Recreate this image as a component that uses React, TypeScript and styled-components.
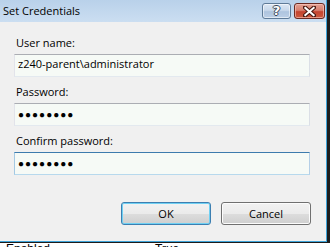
import React from 'react';
import styled, { createGlobalStyle } from 'styled-components';

const GlobalStyle = createGlobalStyle`
  html, body {
    margin: 0;
    padding: 0;
  }
  body {
    background: #fff;
    font-family: 'Open Sans', 'Noto Sans', sans-serif;
    font-size: 11px;
    color: #000;
  }
`;

const Screen = styled.div`
  width: 330px;
  height: 247px;
  overflow: hidden;
  background: #fff;
`;

// dark outline of the window, then the thin aero blue edge inside it
const Frame = styled.div`
  width: 330px;
  height: 243px;
  box-sizing: border-box;
  border-right: 3px solid #1c1c1c;
  border-bottom: 1px solid #1c1c1c;
`;

const Dialog = styled.div`
  height: 100%;
  box-sizing: border-box;
  border-right: 1px solid #3ea4d8;
  border-bottom: 1px solid #3ea4d8;
  background: #f0f0f0;
  display: flex;
  flex-direction: column;
`;

const TitleBar = styled.div`
  height: 22px;
  flex: none;
  box-sizing: border-box;
  padding: 3px 1px 0 3px;
  display: flex;
  align-items: flex-start;
  background: linear-gradient(#b9d1ea, #cbdef1);
`;

const Title = styled.div`
  flex: 1;
  line-height: 16px;
`;

const CaptionButtons = styled.div`
  display: flex;
  gap: 3px;
`;

const CaptionButton = styled.div<{ $close?: boolean }>`
  width: ${({ $close }) => ($close ? '31px' : '29px')};
  height: 16px;
  box-sizing: border-box;
  border-radius: 3px;
  border: 1px solid ${({ $close }) => ($close ? '#6b2a22' : '#5f7b98')};
  box-shadow: inset 0 0 0 1px ${({ $close }) => ($close ? 'rgba(255,210,200,0.55)' : 'rgba(255,255,255,0.55)')};
  background: ${({ $close }) =>
    $close
      ? 'linear-gradient(#e3a194 0%, #d8806f 45%, #c4432f 55%, #cc5a3e 100%)'
      : 'linear-gradient(#dce7f4 0%, #c8d8eb 45%, #aec4de 55%, #bccfe6 100%)'};
  display: flex;
  align-items: center;
  justify-content: center;
`;

const HelpGlyph = styled.span`
  font-family: 'DejaVu Sans', sans-serif;
  font-weight: bold;
  font-size: 13px;
  line-height: 14px;
  color: #fff;
  text-shadow: 1px 0 0 #3b4656, -1px 0 0 #3b4656, 0 1px 0 #3b4656, 0 -1px 0 #3b4656;
`;

const Body = styled.div`
  flex: 1;
  display: flex;
  flex-direction: column;
  padding: 13px 16px 0 14px;
`;

const Group = styled.div`
  display: flex;
  flex-direction: column;
  margin-bottom: 7px;
`;

const Label = styled.div`
  line-height: 15px;
  padding-left: 2px;
  margin-bottom: 4px;
`;

const Field = styled.div<{ $focused?: boolean }>`
  height: 23px;
  box-sizing: border-box;
  padding: 0 3px;
  line-height: 18px;
  background: #f6faf6;
  border: 1px solid;
  border-color: ${({ $focused }) =>
    $focused ? '#3d7bad #b5cfe7 #b7d9ed #a4c9e3' : '#abadb3 #dbdfe6 #e3e9ef #e2e3ea'};
  white-space: nowrap;
  overflow: hidden;
`;

const Dots = styled.span`
  font-family: 'Liberation Sans', sans-serif;
  font-size: 10px;
  letter-spacing: 1px;
  line-height: 21px;
`;

const Footer = styled.div`
  display: flex;
  justify-content: flex-end;
  gap: 10px;
  padding: 0 15px 16px 0;
`;

const Button = styled.div<{ $default?: boolean }>`
  width: 90px;
  height: 23px;
  box-sizing: border-box;
  border: 1px solid ${({ $default }) => ($default ? '#3c7fb1' : '#707070')};
  border-radius: 3px;
  box-shadow: inset 0 0 0 1px ${({ $default }) => ($default ? '#6fd0f3' : '#fcfcfc')};
  background: linear-gradient(#f2f2f2 0%, #ebebeb 50%, #dddddd 51%, #cfcfcf 100%);
  text-align: center;
  line-height: 21px;
`;

const Behind = styled.div`
  height: 4px;
  overflow: hidden;
  display: flex;
  padding-left: 6px;
  font-family: 'Liberation Sans', sans-serif;
  font-size: 12px;
  line-height: 14px;
`;

const Cell = styled.span<{ $w: number }>`
  width: ${({ $w }) => $w}px;
  margin-top: -1px;
`;

const CloseIcon = () => (
  <svg width="13" height="11" viewBox="0 0 13 11">
    <path d="M2 1.5 L11 9.5 M11 1.5 L2 9.5" stroke="#4a1a12" strokeWidth="4.2" strokeLinecap="square" />
    <path d="M2.3 1.8 L10.7 9.2 M10.7 1.8 L2.3 9.2" stroke="#fff" strokeWidth="2" strokeLinecap="square" />
  </svg>
);

const App: React.FC = () => {
  return (
    <Screen>
      <GlobalStyle />
      <Frame>
        <Dialog>
          <TitleBar>
            <Title>Set Credentials</Title>
            <CaptionButtons>
              <CaptionButton>
                <HelpGlyph>?</HelpGlyph>
              </CaptionButton>
              <CaptionButton $close>
                <CloseIcon />
              </CaptionButton>
            </CaptionButtons>
          </TitleBar>
          <Body>
            <Group>
              <Label>User name:</Label>
              <Field>z240-parent\administrator</Field>
            </Group>
            <Group>
              <Label>Password:</Label>
              <Field>
                <Dots>●●●●●●●●</Dots>
              </Field>
            </Group>
            <Group>
              <Label>Confirm password:</Label>
              <Field $focused>
                <Dots>●●●●●●●●</Dots>
              </Field>
            </Group>
          </Body>
          <Footer>
            <Button $default>OK</Button>
            <Button>Cancel</Button>
          </Footer>
        </Dialog>
      </Frame>
      <Behind>
        <Cell $w={149}>Enabled</Cell>
        <Cell $w={60}>True</Cell>
      </Behind>
    </Screen>
  );
};

export default App;
